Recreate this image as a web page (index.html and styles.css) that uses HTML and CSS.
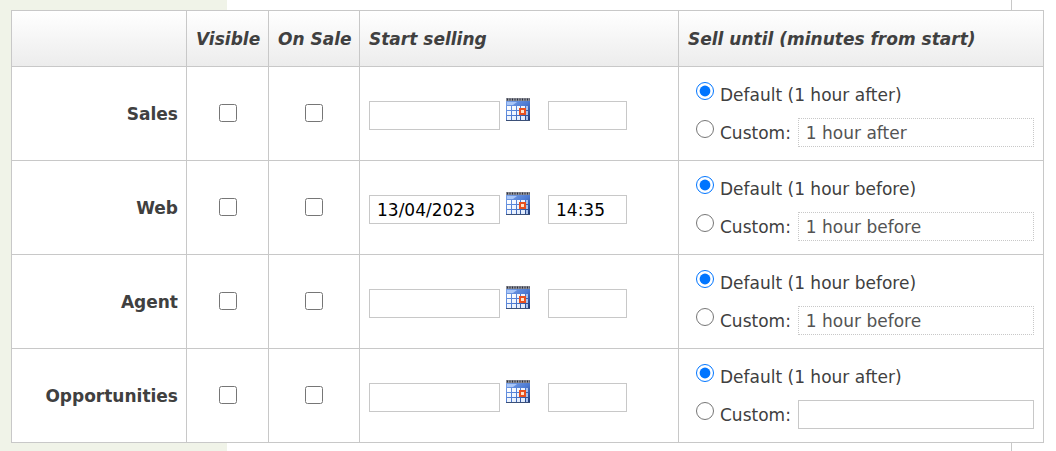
FILE: index.html
```html
<!DOCTYPE html>
<html lang="en">
<head>
<meta charset="utf-8">
<title>Selling channels</title>
<link rel="stylesheet" href="styles.css">
</head>
<body>
<svg class="sprite" aria-hidden="true">
  <defs>
    <linearGradient id="sky" x1="0" y1="0" x2="1" y2="1">
      <stop offset="0" stop-color="#7fa6ea"/>
      <stop offset="0.55" stop-color="#4c7ad2"/>
      <stop offset="1" stop-color="#1d356e"/>
    </linearGradient>
    <linearGradient id="cells" x1="0" y1="0" x2="1" y2="1">
      <stop offset="0" stop-color="#ffffff"/>
      <stop offset="1" stop-color="#dce8fb"/>
    </linearGradient>
    <symbol id="calendar" viewBox="0 0 24 23">
      <rect x="0" y="1" width="24" height="22" fill="url(#sky)"/>
      <path d="M1 4h10l-4 3H1z" fill="#a9c6f7"/>
      <path d="M0 0h24v3H0z" fill="#8d8f99"/>
      <path d="M1 1.5h23" stroke="#2c303c" stroke-width="2" stroke-dasharray="1 1.5"/>
      <path d="M1 8h4v4H1zM6 8h4v4H6zM11 8h3v4h-3zM15 8h4v4h-4zM1 13h4v4H1zM6 13h4v4H6zM11 13h3v4h-3zM1 18h4v4H1zM6 18h4v4H6zM11 18h3v4h-3zM15 18h4v4h-4z" fill="url(#cells)"/>
      <path d="M20 8h2v4h-2zM20 13h2v4h-2zM20 18h2v4h-2z" fill="#a9c2ee"/>
      <rect x="14" y="11" width="5" height="5" fill="#ffe3c8" stroke="#e8501f" stroke-width="2"/>
      <path d="M0 22.5h24" stroke="#3b5078"/>
    </symbol>
  </defs>
</svg>
<table class="channels">
  <colgroup>
    <col class="col-name"><col class="col-visible"><col class="col-sale"><col class="col-start"><col>
  </colgroup>
  <thead>
    <tr><td></td><th scope="col">Visible</th><th scope="col">On Sale</th><th scope="col">Start selling</th><th scope="col">Sell until (minutes from start)</th></tr>
  </thead>
  <tbody>
    <tr>
      <th scope="row">Sales</th>
      <td class="tick"><input type="checkbox" aria-label="Sales visible"></td>
      <td class="tick"><input type="checkbox" aria-label="Sales on sale"></td>
      <td><div class="start"><input class="field date" type="text" aria-label="Sales start date"><button class="pick" type="button" aria-label="Choose date"><svg><use href="#calendar"/></svg></button><input class="field time" type="text" aria-label="Sales start time"></div></td>
      <td>
        <div class="option"><input type="radio" name="sales" id="sales-d" checked><label for="sales-d">Default (1 hour after)</label></div>
        <div class="option"><input type="radio" name="sales" id="sales-c"><label for="sales-c">Custom:</label><input class="field custom" type="text" value="1 hour after" disabled aria-label="Sales custom time"></div>
      </td>
    </tr>
    <tr>
      <th scope="row">Web</th>
      <td class="tick"><input type="checkbox" aria-label="Web visible"></td>
      <td class="tick"><input type="checkbox" aria-label="Web on sale"></td>
      <td><div class="start"><input class="field date" type="text" value="13/04/2023" aria-label="Web start date"><button class="pick" type="button" aria-label="Choose date"><svg><use href="#calendar"/></svg></button><input class="field time" type="text" value="14:35" aria-label="Web start time"></div></td>
      <td>
        <div class="option"><input type="radio" name="web" id="web-d" checked><label for="web-d">Default (1 hour before)</label></div>
        <div class="option"><input type="radio" name="web" id="web-c"><label for="web-c">Custom:</label><input class="field custom" type="text" value="1 hour before" disabled aria-label="Web custom time"></div>
      </td>
    </tr>
    <tr>
      <th scope="row">Agent</th>
      <td class="tick"><input type="checkbox" aria-label="Agent visible"></td>
      <td class="tick"><input type="checkbox" aria-label="Agent on sale"></td>
      <td><div class="start"><input class="field date" type="text" aria-label="Agent start date"><button class="pick" type="button" aria-label="Choose date"><svg><use href="#calendar"/></svg></button><input class="field time" type="text" aria-label="Agent start time"></div></td>
      <td>
        <div class="option"><input type="radio" name="agent" id="agent-d" checked><label for="agent-d">Default (1 hour before)</label></div>
        <div class="option"><input type="radio" name="agent" id="agent-c"><label for="agent-c">Custom:</label><input class="field custom" type="text" value="1 hour before" disabled aria-label="Agent custom time"></div>
      </td>
    </tr>
    <tr>
      <th scope="row">Opportunities</th>
      <td class="tick"><input type="checkbox" aria-label="Opportunities visible"></td>
      <td class="tick"><input type="checkbox" aria-label="Opportunities on sale"></td>
      <td><div class="start"><input class="field date" type="text" aria-label="Opportunities start date"><button class="pick" type="button" aria-label="Choose date"><svg><use href="#calendar"/></svg></button><input class="field time" type="text" aria-label="Opportunities start time"></div></td>
      <td>
        <div class="option"><input type="radio" name="opp" id="opp-d" checked><label for="opp-d">Default (1 hour after)</label></div>
        <div class="option"><input type="radio" name="opp" id="opp-c"><label for="opp-c">Custom:</label><input class="field custom" type="text" aria-label="Opportunities custom time"></div>
      </td>
    </tr>
  </tbody>
</table>
</body>
</html>
```
FILE: styles.css
```css
* { box-sizing: border-box; }

html { min-height: 100%; background: #fff; }

body {
  min-height: 100vh;
  margin: 0;
  padding: 10px 12px 8px 11px;
  background:
    linear-gradient(#f0f3e8, #f0f3e8) left top / 227px 100% no-repeat,
    linear-gradient(#c8c8c8, #c8c8c8) right 44px top / 1px 100% no-repeat,
    #fff;
  font: 17px/20px Verdana, "DejaVu Sans", sans-serif;
  color: #404040;
}

.sprite { position: absolute; width: 0; height: 0; }

.channels {
  width: 100%;
  table-layout: fixed;
  border-collapse: separate;
  border-spacing: 0;
  border: solid #c8c8c8;
  border-width: 1px 0 0 1px;
  background: #fff;
}

.col-name { width: 175px; }
.col-visible { width: 82px; }
.col-sale { width: 91px; }
.col-start { width: 319px; }

.channels th,
.channels td {
  padding: 8px 9px;
  border: solid #c8c8c8;
  border-width: 0 1px 1px 0;
  text-align: left;
  vertical-align: middle;
}

.channels thead tr {
  height: 56px;
  background: linear-gradient(#fff, #ececec);
}

.channels thead th { font-size: 17px; font-style: italic; white-space: nowrap; }
.channels tbody tr { height: 94px; }
.channels tbody th { padding-right: 8px; text-align: right; }
.channels .tick { padding-bottom: 10px; text-align: center; }

input { margin: 0; }

input[type="checkbox"],
input[type="radio"] {
  flex: none;
  width: 18px;
  height: 18px;
}

input[type="checkbox"] {
  display: block;
  margin: 0 auto;
}

input[type="radio"] { margin: 0 6px 8px 8px; }

.field {
  height: 29px;
  padding: 0 7px;
  border: 1px solid #c8c8c8;
  border-radius: 0;
  background: #fff;
  color: #000;
  font: inherit;
}

.field:disabled { border-style: dotted; color: #545454; }

.start { display: flex; align-items: center; padding-top: 4px; }
.date { width: 131px; }
.time { width: 79px; }

.pick {
  margin: 0 18px 12px 6px;
  padding: 0;
  border: 0;
  background: none;
  line-height: 0;
}

.pick svg { display: block; width: 24px; height: 23px; }

.option { display: flex; align-items: center; height: 38px; }
.custom { flex: 1; min-width: 0; margin-left: 7px; }
```
